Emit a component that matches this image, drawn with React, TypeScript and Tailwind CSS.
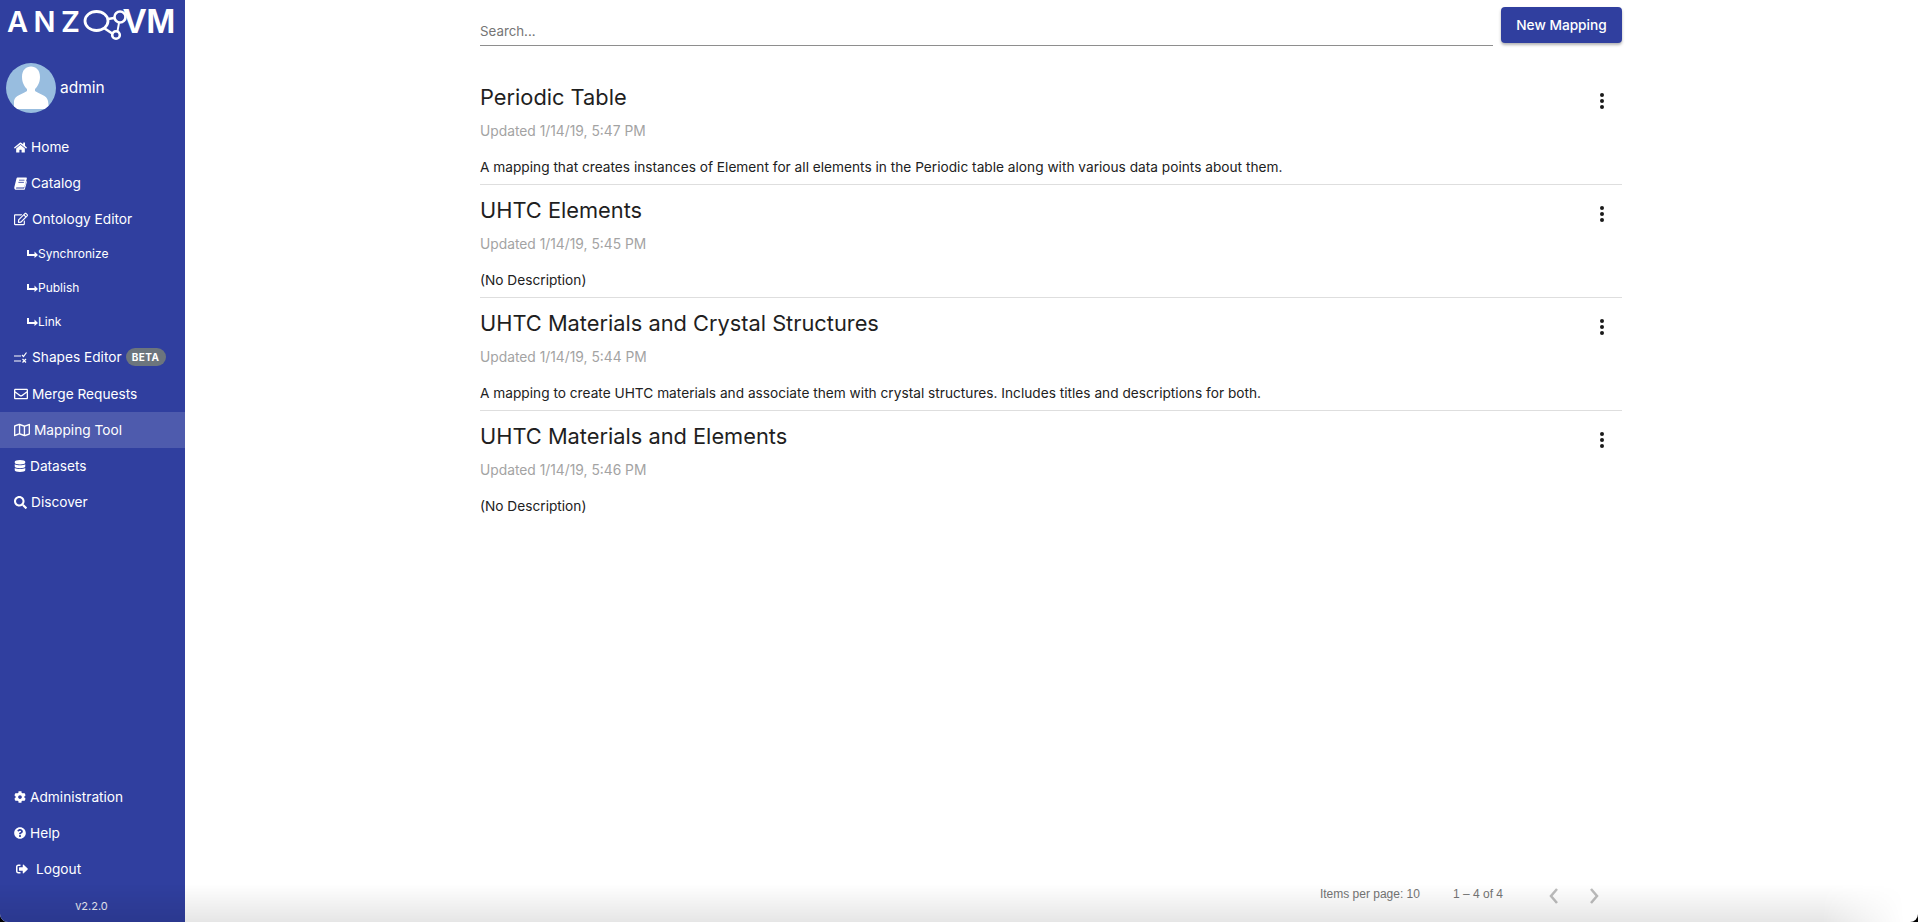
import React from "react";
import {
  FaCog,
  FaDatabase,
  FaHome,
  FaQuestionCircle,
  FaRegEdit,
  FaRegEnvelope,
  FaRegMap,
  FaSearch,
  FaSignOutAlt,
} from "react-icons/fa";

const mappings = [
  { title: "Periodic Table", updated: "Updated 1/14/19, 5:47 PM", description: "A mapping that creates instances of Element for all elements in the Periodic table along with various data points about them." },
  { title: "UHTC Elements", updated: "Updated 1/14/19, 5:45 PM", description: "(No Description)" },
  { title: "UHTC Materials and Crystal Structures", updated: "Updated 1/14/19, 5:44 PM", description: "A mapping to create UHTC materials and associate them with crystal structures. Includes titles and descriptions for both." },
  { title: "UHTC Materials and Elements", updated: "Updated 1/14/19, 5:46 PM", description: "(No Description)" },
];

const Logo = () => (
  <div className="flex h-[40px] items-start pl-[7px] pt-[7px] text-white">
    <span className="w-[76px] text-[29px] leading-[29px] font-semibold tracking-[5.500px]">ANZ</span>
    <svg width="46" height="36" viewBox="0 0 46 36" fill="none" stroke="white" className="-mt-[1px]">
      <ellipse cx="13.500" cy="15" rx="11.500" ry="9.500" strokeWidth="2.800" />
      <path d="M21 22 L30 28" strokeWidth="2.600" />
      <circle cx="33" cy="29" r="3.800" strokeWidth="2.600" />
      <path d="M25 13 L31 12" strokeWidth="2.400" />
      <circle cx="37" cy="11" r="5.500" strokeWidth="2.600" />
      <path d="M34.500 25 L36 17" strokeWidth="2" />
    </svg>
    <span className="-ml-[6px] -mt-[4px] text-[35px] leading-[35px] font-bold [font-family:'Liberation_Sans',sans-serif]">VM</span>
  </div>
);

const Avatar = () => (
  <svg width="50" height="50" viewBox="0 0 50 50" className="shrink-0">
    <defs>
      <clipPath id="avatar-clip">
        <circle cx="25" cy="25" r="25" />
      </clipPath>
    </defs>
    <g clipPath="url(#avatar-clip)">
      <rect width="50" height="50" fill="#98bddf" />
      <path d="M16 14 C16 7 20 3.500 25 3.500 C30 3.500 34 7 34 14 C34 20 31 24 29 26 L29 28 C33 31 41 32 42 38 L43 46 L8 46 L8 38 C9 32 17 31 21 28 L21 26 C19 24 16 20 16 14 Z" fill="white" />
    </g>
  </svg>
);

const BookIcon = () => (
  <svg width="13" height="13" viewBox="0 0 13 13" className="shrink-0">
    <path fill="white" d="M3.500 0.500 H12 C12.800 0.500 13 1.200 12.800 1.800 L10.500 9.500 C10.300 10.100 9.800 10.400 9.200 10.400 H2.600 C1.800 10.400 1.800 11.500 2.600 11.500 H10 L12.400 4 L13 4.500 L10.800 12.200 C10.700 12.600 10.300 12.800 9.900 12.800 H2.200 C0.800 12.800 0 11.600 0.300 10.200 L2.500 1.500 C2.700 0.900 3 0.500 3.500 0.500 Z" />
    <path stroke="#303f9f" strokeWidth="0.800" d="M5 3.200 H10.500 M4.400 5.400 H9.900" />
  </svg>
);

const SubArrow = () => (
  <svg width="11" height="8" viewBox="0 0 11 8" className="shrink-0 fill-white">
    <path d="M0 0 H2 V4 H7.500 V1.500 L11 5 L7.500 8 V6 H0 Z" />
  </svg>
);

const ShapesIcon = () => (
  <svg width="13" height="12" viewBox="0 0 13 12" className="shrink-0" stroke="white" fill="none" strokeWidth="1.2">
    <path d="M0 5 H7 M0 10 H7" />
    <path d="M8 4 L9.500 5.500 L12.500 1.500" />
    <path d="M8.500 8 L12 11.500 M12 8 L8.500 11.500" />
  </svg>
);

const NavItem = ({ icon, label, gap = "gap-[4px]", active, children }: { icon: React.ReactNode; label: string; gap?: string; active?: boolean; children?: React.ReactNode }) => (
  <div className={`flex h-[36px] items-center pl-[14px] text-[13.700px] text-white ${gap} ${active ? "bg-white/15" : ""}`}>
    {icon}
    <span>{label}</span>
    {children}
  </div>
);

const SubItem = ({ label }: { label: string }) => (
  <div className="flex h-[34px] items-center pl-[27px] text-[12px] text-white">
    <SubArrow />
    <span>{label}</span>
  </div>
);

const Sidebar = () => (
  <aside className="flex h-full w-[185px] shrink-0 flex-col bg-[#303f9f]">
    <Logo />
    <div className="mt-[23px] flex items-center gap-[4px] pl-[6px] text-[15.500px] text-white">
      <Avatar />
      <span>admin</span>
    </div>
    <nav className="mt-[16px]">
      <NavItem icon={<FaHome size={13} />} label="Home" />
      <NavItem icon={<BookIcon />} label="Catalog" />
      <NavItem icon={<FaRegEdit size={14} />} label="Ontology Editor" />
      <SubItem label="Synchronize" />
      <SubItem label="Publish" />
      <SubItem label="Link" />
      <div className="pb-[1px]">
        <NavItem icon={<ShapesIcon />} label="Shapes Editor" gap="gap-[5px]">
          <span className="-ml-[1px] rounded-full bg-[#6c757d] px-[6px] text-[10px] leading-[18px] font-bold tracking-[0.5px]">BETA</span>
        </NavItem>
      </div>
      <NavItem icon={<FaRegEnvelope size={14} />} label="Merge Requests" />
      <NavItem icon={<FaRegMap size={16} />} label="Mapping Tool" active />
      <NavItem icon={<FaDatabase size={12} />} label="Datasets" />
      <NavItem icon={<FaSearch size={13} />} label="Discover" />
    </nav>
    <div className="mt-auto">
      <NavItem icon={<FaCog size={12} />} label="Administration" />
      <NavItem icon={<FaQuestionCircle size={12} />} label="Help" />
      <NavItem icon={<FaSignOutAlt size={12} className="ml-[2px]" />} label="Logout" gap="gap-[8px]" />
      <div className="flex h-[35px] items-center justify-center pt-[3px] pr-[2px] text-[11px] text-white/90">v2.2.0</div>
    </div>
  </aside>
);

const MappingRow = ({ title, updated, description, last }: { title: string; updated: string; description: string; last: boolean }) => (
  <div className={`relative h-[113px] ${last ? "" : "border-b border-[#dedede]"}`}>
    <h2 className="pt-[9px] text-[21.800px] leading-[32px] text-[#1f1f1f]">{title}</h2>
    <p className="mt-[9px] text-[13.800px] leading-[18px] text-[#a3a3a3]">{updated}</p>
    <p className="mt-[18px] text-[13.700px] leading-[18px] text-[#212121]">{description}</p>
    <div className="absolute right-[18px] top-[21px] flex flex-col gap-[2px]">
      <span className="size-[4px] rounded-full bg-[#1a1a1a]" />
      <span className="size-[4px] rounded-full bg-[#1a1a1a]" />
      <span className="size-[4px] rounded-full bg-[#1a1a1a]" />
    </div>
  </div>
);

export default function App() {
  return (
    <div className="h-[922px] w-[1918px] bg-black">
      <div className="relative flex h-full overflow-hidden rounded-b-[8px] bg-white [font-family:Inter,sans-serif]">
        <Sidebar />
        <main className="flex min-w-0 flex-1 flex-col">
          <div className="ml-[295px] w-[1142px] flex-1">
            <div className="flex items-start gap-[8px] pt-[7px]">
              <div className="flex h-[39px] flex-1 items-end border-b border-[#8e8e8e] pb-[4px] text-[13.300px] leading-[20px] text-[#757575]">Search...</div>
              <button className="h-[36px] w-[121px] rounded-[4px] bg-[#303f9f] text-[13.700px] font-medium text-white shadow-[0_2px_3px_rgba(0,0,0,0.3)]">New Mapping</button>
            </div>
            <div className="mt-[26px]">
              {mappings.map((m, i) => (
                <MappingRow key={m.title} {...m} last={i === mappings.length - 1} />
              ))}
            </div>
          </div>
          <footer className="flex h-[52px] items-start justify-end pr-[318px] pt-[15px] text-[12px] text-[#757575] [font-family:'Liberation_Sans',sans-serif]">
            <span>Items per page: 10</span>
            <span className="ml-[33px]">1 – 4 of 4</span>
            <svg width="12" height="16" viewBox="0 0 12 16" fill="none" stroke="#bdbdbd" strokeWidth="2.500" className="ml-[45px] mt-[3px]"><path d="M9 1 L3 8 L9 15" /></svg>
            <svg width="12" height="16" viewBox="0 0 12 16" fill="none" stroke="#bdbdbd" strokeWidth="2.500" className="ml-[28px] mt-[3px]"><path d="M3 1 L9 8 L3 15" /></svg>
          </footer>
        </main>
        <div className="pointer-events-none absolute inset-x-0 bottom-0 h-[38px] bg-gradient-to-b from-transparent to-black/10 [mask-image:linear-gradient(to_right,black_95%,transparent_99.300%)]" />
      </div>
    </div>
  );
}
